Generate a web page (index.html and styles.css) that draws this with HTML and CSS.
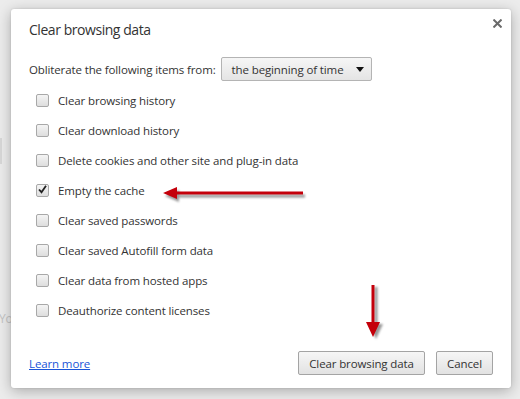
FILE: index.html
```html
<!DOCTYPE html>
<html>
<head>
<meta charset="utf-8">
<link rel="stylesheet" href="styles.css">
</head>
<body>
<div class="behind">
  <span class="behind-edge"></span>
  <span class="behind-text">You</span>
</div>
<div class="dialog">
  <div class="header">
    <h1 class="title">Clear browsing data</h1>
    <span class="close">
      <svg width="9" height="9" viewBox="0 0 9 9"><path d="M1.2 1.2 L7.8 7.8 M7.8 1.2 L1.2 7.8" stroke="#6a6a6a" stroke-width="2" stroke-linecap="square"/></svg>
    </span>
  </div>
  <div class="period">
    <span>Obliterate the following items from:</span>
    <span class="select">
      <span>the beginning of time</span>
      <svg class="caret" width="8" height="5" viewBox="0 0 8 5"><path d="M0 0 H8 L4 5 Z" fill="#111"/></svg>
    </span>
  </div>
  <ul class="options">
    <li><span class="box"></span>Clear browsing history</li>
    <li><span class="box"></span>Clear download history</li>
    <li><span class="box"></span>Delete cookies and other site and plug-in data</li>
    <li><span class="box checked"><svg width="11" height="11" viewBox="0 0 11 11"><path d="M2 5.5 L4.5 8.2 L9 1.8" fill="none" stroke="#222" stroke-width="1.8"/></svg></span>Empty the cache</li>
    <li><span class="box"></span>Clear saved passwords</li>
    <li><span class="box"></span>Clear saved Autofill form data</li>
    <li><span class="box"></span>Clear data from hosted apps</li>
    <li><span class="box"></span>Deauthorize content licenses</li>
  </ul>
  <div class="footer">
    <a class="learn" href="#">Learn more</a>
    <div class="buttons">
      <span class="btn btn-clear">Clear browsing data</span>
      <span class="btn btn-cancel">Cancel</span>
    </div>
  </div>
  <svg class="arrow arrow-left" width="150" height="22" viewBox="0 0 150 22">
    <defs>
      <filter id="sh1" x="-10%" y="-50%" width="120%" height="200%">
        <feGaussianBlur stdDeviation="1.3"/>
      </filter>
    </defs>
    <g transform="translate(2,3)" filter="url(#sh1)" fill="#777" opacity="0.75">
      <polygon points="0,8 14,2 14,6.5 140,6.5 140,9.5 14,9.5 14,14"/>
    </g>
    <polygon points="0,8 14,2 14,6.5 140,6.5 140,9.5 14,9.5 14,14" fill="#c4000a"/>
  </svg>
  <svg class="arrow arrow-down" width="22" height="60" viewBox="0 0 22 60">
    <defs>
      <filter id="sh2" x="-50%" y="-10%" width="200%" height="120%">
        <feGaussianBlur stdDeviation="1.3"/>
      </filter>
    </defs>
    <g transform="translate(3,2)" filter="url(#sh2)" fill="#777" opacity="0.75">
      <polygon points="6.5,0 9.5,0 9.5,37 15,37 8,52 1,37 6.5,37"/>
    </g>
    <polygon points="6.5,0 9.5,0 9.5,37 15,37 8,52 1,37 6.5,37" fill="#c4000a"/>
  </svg>
</div>
</body>
</html>
```
FILE: styles.css
```css
html, body {
  margin: 0;
  padding: 0;
}
body {
  width: 520px;
  height: 399px;
  overflow: hidden;
  background: #ececec;
  font-family: "Open Sans", "Noto Sans", sans-serif;
  font-size: 11.5px;
  letter-spacing: -0.12px;
  color: #333;
  position: relative;
  padding-top: 9px;
  box-sizing: border-box;
}
.behind {
  position: absolute;
  left: 0;
  top: 0;
  width: 20px;
  height: 399px;
}
.behind-edge {
  position: absolute;
  left: 0;
  top: 138px;
  width: 2px;
  height: 26px;
  background: #d8d8d8;
}
.behind-text {
  position: absolute;
  left: -1px;
  top: 310px;
  color: #c4c4c4;
  font-size: 12px;
}
.dialog {
  position: relative;
  width: 500px;
  height: 379px;
  margin-left: 11px;
  background: #fff;
  border-radius: 3px;
  box-shadow: 0 3px 14px rgba(0,0,0,0.28), 0 0 2px rgba(0,0,0,0.15);
  padding: 11px 18px 13px 18px;
  box-sizing: border-box;
  display: flex;
  flex-direction: column;
}
.header {
  display: flex;
  justify-content: space-between;
  align-items: flex-start;
}
.title {
  margin: 0;
  font-weight: normal;
  font-size: 14px;
  letter-spacing: -0.45px;
  line-height: 20px;
  color: #333;
}
.close {
  display: flex;
  margin-top: -1px;
  margin-right: -9px;
}
.period {
  display: flex;
  align-items: center;
  gap: 5px;
  margin-top: 17px;
  height: 24px;
}
.select {
  display: flex;
  align-items: center;
  justify-content: space-between;
  box-sizing: border-box;
  width: 151px;
  height: 24px;
  padding: 0 7px 0 10px;
  border: 1px solid #b4b4b4;
  border-radius: 2px;
  background: linear-gradient(#f6f6f6, #e4e4e4);
  color: #333;
}
.options {
  list-style: none;
  margin: 4px 0 0 0;
  padding: 0;
}
.options li {
  display: flex;
  align-items: center;
  height: 30px;
  padding-left: 7px;
}
.box {
  width: 13px;
  height: 13px;
  box-sizing: border-box;
  border: 1px solid #a8a8a8;
  border-radius: 2px;
  background: linear-gradient(#f4f4f4, #dedede);
  margin-right: 9px;
  display: flex;
  align-items: center;
  justify-content: center;
}
.box svg {
  margin-top: -1px;
}
.footer {
  margin-top: auto;
  display: flex;
  justify-content: space-between;
  align-items: center;
}
.learn {
  color: #1a55d8;
  text-decoration: underline;
}
.buttons {
  display: flex;
  gap: 11px;
}
.btn {
  box-sizing: border-box;
  height: 24px;
  display: flex;
  align-items: center;
  justify-content: center;
  border: 1px solid #a4a4a4;
  border-radius: 2px;
  background: linear-gradient(#f6f6f6, #e2e2e2);
  color: #333;
}
.btn-clear {
  width: 127px;
}
.btn-cancel {
  width: 57px;
}
.arrow {
  position: absolute;
}
.arrow-left {
  left: 152px;
  top: 176px;
}
.arrow-down {
  left: 354px;
  top: 276px;
}
```
